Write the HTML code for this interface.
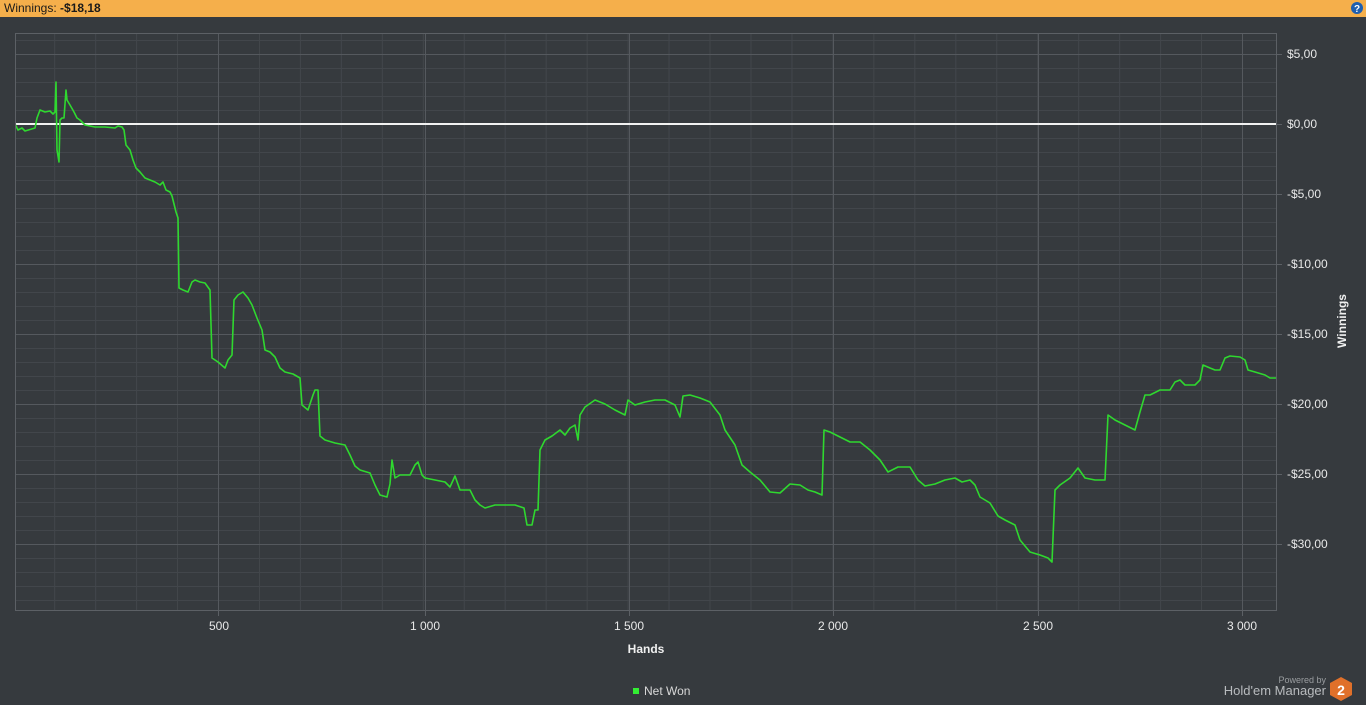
<!DOCTYPE html>
<html><head><meta charset="utf-8"><style>
html,body{margin:0;padding:0;width:1366px;height:705px;overflow:hidden;background:#363a3e;font-family:"Liberation Sans",sans-serif;}
.top{position:absolute;left:0;top:0;width:1366px;height:17px;background:#f5af4b;font-size:12px;line-height:17px;color:#1a1a1a;}
.top span{margin-left:4px}
svg{position:absolute;left:0;top:0}
</style></head><body>
<div class="top"><span>Winnings: <b>-$18,18</b></span></div>
<svg width="1366" height="705" viewBox="0 0 1366 705">
<defs>
<pattern id="mh" patternUnits="userSpaceOnUse" x="0" y="12" width="2000" height="14"><line x1="0" y1="0.5" x2="2000" y2="0.5" stroke="#42464b" stroke-width="1"/></pattern>
<pattern id="mv" patternUnits="userSpaceOnUse" x="13.2" y="0" width="40.96" height="1000"><line x1="0.5" y1="0" x2="0.5" y2="1000" stroke="#42464b" stroke-width="1"/></pattern>
<clipPath id="pc"><rect x="15" y="33" width="1262" height="578"/></clipPath>
</defs>
<circle cx="1357" cy="8" r="6" fill="#1f5fb0"/><text x="1357" y="12" font-size="10" font-weight="bold" fill="#fff" text-anchor="middle">?</text>
<g clip-path="url(#pc)">
<rect x="15" y="33" width="1262" height="578" fill="url(#mh)"/>
<rect x="15" y="33" width="1262" height="578" fill="url(#mv)"/>
<g stroke="#55595e" stroke-width="1">
<line x1="15" y1="54.5" x2="1277" y2="54.5"/><line x1="15" y1="194.5" x2="1277" y2="194.5"/><line x1="15" y1="264.5" x2="1277" y2="264.5"/><line x1="15" y1="334.5" x2="1277" y2="334.5"/><line x1="15" y1="404.5" x2="1277" y2="404.5"/><line x1="15" y1="474.5" x2="1277" y2="474.5"/><line x1="15" y1="544.5" x2="1277" y2="544.5"/>
<line x1="218.5" y1="33" x2="218.5" y2="611"/><line x1="425.5" y1="33" x2="425.5" y2="611"/><line x1="629.5" y1="33" x2="629.5" y2="611"/><line x1="833.5" y1="33" x2="833.5" y2="611"/><line x1="1038.5" y1="33" x2="1038.5" y2="611"/><line x1="1242.5" y1="33" x2="1242.5" y2="611"/>
</g>
<line x1="15" y1="124" x2="1277" y2="124" stroke="#f2f2f2" stroke-width="2"/>
<polyline fill="none" stroke="#2fd82f" stroke-width="1.6" stroke-linejoin="round" points="15,124 18,130 22,128 25,131 35,128 37,118 40,110 45,112 50,111 53,114 55,112 56,82 57,150 59,162 60,120 62,118 64,118 66,90 67,100 70,105 74,112 77,118 80,120 85,125 95,127 105,127 115,128 118,126 122,127 124,130 126,145 130,150 133,160 136,168 140,172 145,178 150,180 155,182 160,185 163,182 166,190 170,192 172,196 176,212 178,218 179,288 183,290 188,292 192,282 195,280 200,282 205,283 210,290 212,358 218,362 225,368 228,360 232,355 234,300 238,295 243,292 248,298 252,305 257,318 262,330 265,350 270,352 275,357 280,368 285,372 293,374 300,378 302,405 308,410 313,395 315,390 318,390 320,436 325,440 335,443 345,445 350,455 355,466 360,470 370,473 375,485 380,495 387,497 390,484 392,460 395,478 400,475 410,475 415,465 418,462 422,475 425,478 435,480 445,482 450,487 455,476 460,490 470,490 475,500 480,505 485,508 495,505 505,505 515,505 524,508 527,525 532,525 535,510 538,510 540,450 545,440 552,436 560,430 565,435 570,428 575,425 578,440 580,415 585,407 595,400 605,404 615,410 625,415 628,400 635,405 645,402 655,400 665,400 675,405 680,417 683,396 690,395 700,398 710,402 720,415 725,430 735,445 742,465 750,472 760,480 770,492 780,493 790,484 800,485 808,490 815,492 822,495 824,430 830,432 840,437 850,442 860,442 870,450 880,460 888,472 898,467 910,467 918,480 925,486 935,484 945,480 955,478 962,482 970,480 975,485 980,497 990,503 998,516 1005,520 1015,525 1020,540 1030,552 1040,555 1048,558 1052,562 1055,490 1060,485 1070,478 1078,468 1085,478 1095,480 1105,480 1108,415 1115,420 1125,425 1135,430 1140,412 1145,395 1150,395 1160,390 1170,390 1175,382 1180,380 1185,385 1195,385 1200,380 1203,365 1210,368 1215,370 1220,370 1225,358 1230,356 1240,357 1245,360 1248,370 1255,372 1265,375 1270,378 1277,378"/>
</g>
<rect x="15.5" y="33.5" width="1261" height="577" fill="none" stroke="#5c6065"/>
<g stroke="#5c6065"><line x1="1277" y1="54.5" x2="1282" y2="54.5"/><line x1="1277" y1="124.5" x2="1282" y2="124.5"/><line x1="1277" y1="194.5" x2="1282" y2="194.5"/><line x1="1277" y1="264.5" x2="1282" y2="264.5"/><line x1="1277" y1="334.5" x2="1282" y2="334.5"/><line x1="1277" y1="404.5" x2="1282" y2="404.5"/><line x1="1277" y1="474.5" x2="1282" y2="474.5"/><line x1="1277" y1="544.5" x2="1282" y2="544.5"/>
<line x1="218.5" y1="611" x2="218.5" y2="616"/><line x1="425.5" y1="611" x2="425.5" y2="616"/><line x1="629.5" y1="611" x2="629.5" y2="616"/><line x1="833.5" y1="611" x2="833.5" y2="616"/><line x1="1038.5" y1="611" x2="1038.5" y2="616"/><line x1="1242.5" y1="611" x2="1242.5" y2="616"/></g>
<g fill="#e8e8e8" font-size="12">
<text x="1287" y="58">$5,00</text><text x="1287" y="128">$0,00</text><text x="1287" y="198">-$5,00</text><text x="1287" y="268">-$10,00</text><text x="1287" y="338">-$15,00</text><text x="1287" y="408">-$20,00</text><text x="1287" y="478">-$25,00</text><text x="1287" y="548">-$30,00</text>
</g>
<g fill="#e8e8e8" font-size="12" text-anchor="middle">
<text x="219" y="630">500</text><text x="425" y="630">1 000</text><text x="629" y="630">1 500</text><text x="833" y="630">2 000</text><text x="1038" y="630">2 500</text><text x="1242" y="630">3 000</text>
</g>
<text x="646" y="653" fill="#f0f0f0" font-size="12" font-weight="bold" text-anchor="middle">Hands</text>
<text transform="translate(1346,321) rotate(-90)" fill="#f0f0f0" font-size="12" font-weight="bold" text-anchor="middle">Winnings</text>
<rect x="633" y="688" width="6" height="6" fill="#33ee33"/>
<text x="644" y="695" fill="#d8d8d8" font-size="12">Net Won</text>
<text x="1326" y="683" fill="#9a9da0" font-size="9" text-anchor="end">Powered by</text>
<text x="1326" y="695" fill="#b8bbbe" font-size="13" text-anchor="end">Hold'em Manager</text>
<polygon points="1341,677 1352,683 1352,695 1341,701 1330,695 1330,683" fill="#e0702a"/>
<text x="1341" y="695" fill="#fff" font-size="14" font-weight="bold" text-anchor="middle">2</text>
</svg>
</body></html>
